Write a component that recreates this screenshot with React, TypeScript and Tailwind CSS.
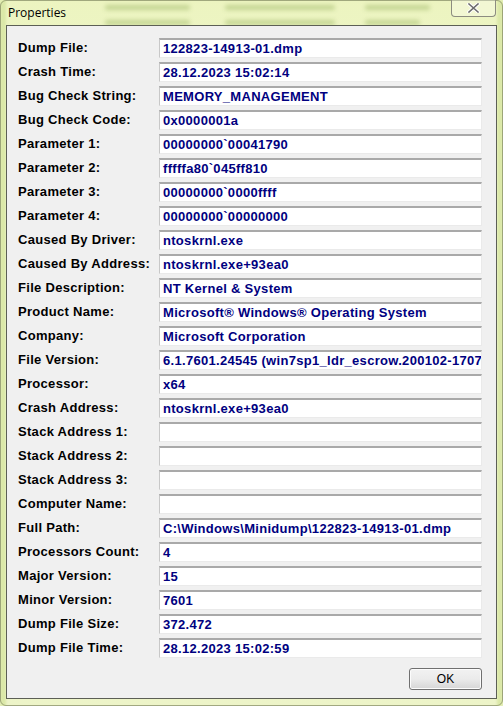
import React from "react";

const ROWS: [string, string][] = [
  ["Dump File:", "122823-14913-01.dmp"],
  ["Crash Time:", "28.12.2023 15:02:14"],
  ["Bug Check String:", "MEMORY_MANAGEMENT"],
  ["Bug Check Code:", "0x0000001a"],
  ["Parameter 1:", "00000000`00041790"],
  ["Parameter 2:", "fffffa80`045ff810"],
  ["Parameter 3:", "00000000`0000ffff"],
  ["Parameter 4:", "00000000`00000000"],
  ["Caused By Driver:", "ntoskrnl.exe"],
  ["Caused By Address:", "ntoskrnl.exe+93ea0"],
  ["File Description:", "NT Kernel & System"],
  ["Product Name:", "Microsoft® Windows® Operating System"],
  ["Company:", "Microsoft Corporation"],
  ["File Version:", "6.1.7601.24545 (win7sp1_ldr_escrow.200102-1707)"],
  ["Processor:", "x64"],
  ["Crash Address:", "ntoskrnl.exe+93ea0"],
  ["Stack Address 1:", ""],
  ["Stack Address 2:", ""],
  ["Stack Address 3:", ""],
  ["Computer Name:", ""],
  ["Full Path:", "C:\\Windows\\Minidump\\122823-14913-01.dmp"],
  ["Processors Count:", "4"],
  ["Major Version:", "15"],
  ["Minor Version:", "7601"],
  ["Dump File Size:", "372.472"],
  ["Dump File Time:", "28.12.2023 15:02:59"],
];

// blurred list rows showing through the glass frame
function GlassBackdrop() {
  const bars = [
    { top: 5, left: 105, w: 85 },
    { top: 5, left: 225, w: 110 },
    { top: 5, left: 365, w: 65 },
    { top: 20, left: 105, w: 85 },
    { top: 20, left: 225, w: 110 },
    { top: 20, left: 365, w: 55 },
  ];
  return (
    <div className="absolute inset-0 overflow-hidden bg-[#f1f7cf]">
      <div className="absolute inset-0 bg-gradient-to-b from-[#ecf4c0] via-[#f5f9dc] to-[#edf4c8]" />
      {bars.map((b, i) => (
        <div
          key={i}
          className="absolute h-[5px] rounded-full bg-[#c4d593] blur-[2px]"
          style={{ top: b.top, left: b.left, width: b.w }}
        />
      ))}
      <div className="absolute left-0 top-0 bottom-0 w-[6px] bg-[#dbe8a8] blur-[1px]" />
      <div className="absolute right-0 top-0 bottom-0 w-[6px] bg-[#dbe8a8] blur-[1px]" />
    </div>
  );
}

function CloseButton() {
  return (
    <div className="absolute right-[7px] top-0 flex h-[17px] w-[45px] items-center justify-center rounded-b-[4px] border border-t-0 border-[#8c8c80] bg-white/30">
      <svg width="13" height="10" viewBox="0 0 13 10">
        <path
          d="M2 1 L11 9 M11 1 L2 9"
          stroke="#ffffff"
          strokeWidth="3.4"
          strokeLinecap="square"
        />
        <path
          d="M2 1 L11 9 M11 1 L2 9"
          stroke="#6c6c6c"
          strokeWidth="1.6"
          strokeLinecap="square"
        />
      </svg>
    </div>
  );
}

export default function App() {
  return (
    <div className="relative h-[706px] w-[503px] overflow-hidden">
      <GlassBackdrop />
      <div className="absolute left-0 top-0 h-full w-full rounded-[6px] border border-[#6e7450]/60" />
      <CloseButton />

      <div className="relative flex h-full flex-col px-[6px] pb-[7px]">
        <div
          className="flex h-[25px] items-center pl-[2px] text-[12px] text-black"
          style={{ fontFamily: '"Open Sans", "Noto Sans", sans-serif' }}
        >
          Properties
        </div>

        <div
          className="flex flex-1 flex-col border border-[#5c5f55] bg-[#f0f0f0] pl-[11px] pr-[14px] pt-[12px]"
          style={{ fontFamily: '"Liberation Sans", Arial, sans-serif' }}
        >
          <div className="flex flex-col gap-[4px]">
            {ROWS.map(([label, value]) => (
              <div key={label} className="flex h-[20px] items-center">
                <div className="w-[141px] shrink-0 text-[13px] font-bold tracking-[0.3px] text-black">
                  {label}
                </div>
                <div className="h-[20px] flex-1 overflow-hidden whitespace-nowrap border-t-[2px] border-l border-b border-r border-t-[#a9a9a9] border-l-[#c8c8c8] border-b-[#eaeaea] border-r-[#eaeaea] bg-white pl-[3px] text-[13px] font-bold leading-[17px] tracking-[0.3px] text-[#000080]">
                  {value}
                </div>
              </div>
            ))}
          </div>

          <div className="mt-[10px] flex justify-end">
            <button className="flex h-[22px] w-[73px] items-center justify-center rounded-[3px] border border-[#707070] bg-gradient-to-b from-[#f2f2f2] via-[#ebebeb] to-[#d6d6d6] text-[12px] text-black shadow-[inset_0_0_0_1px_#fcfcfc]">
              OK
            </button>
          </div>
        </div>
      </div>
    </div>
  );
}
